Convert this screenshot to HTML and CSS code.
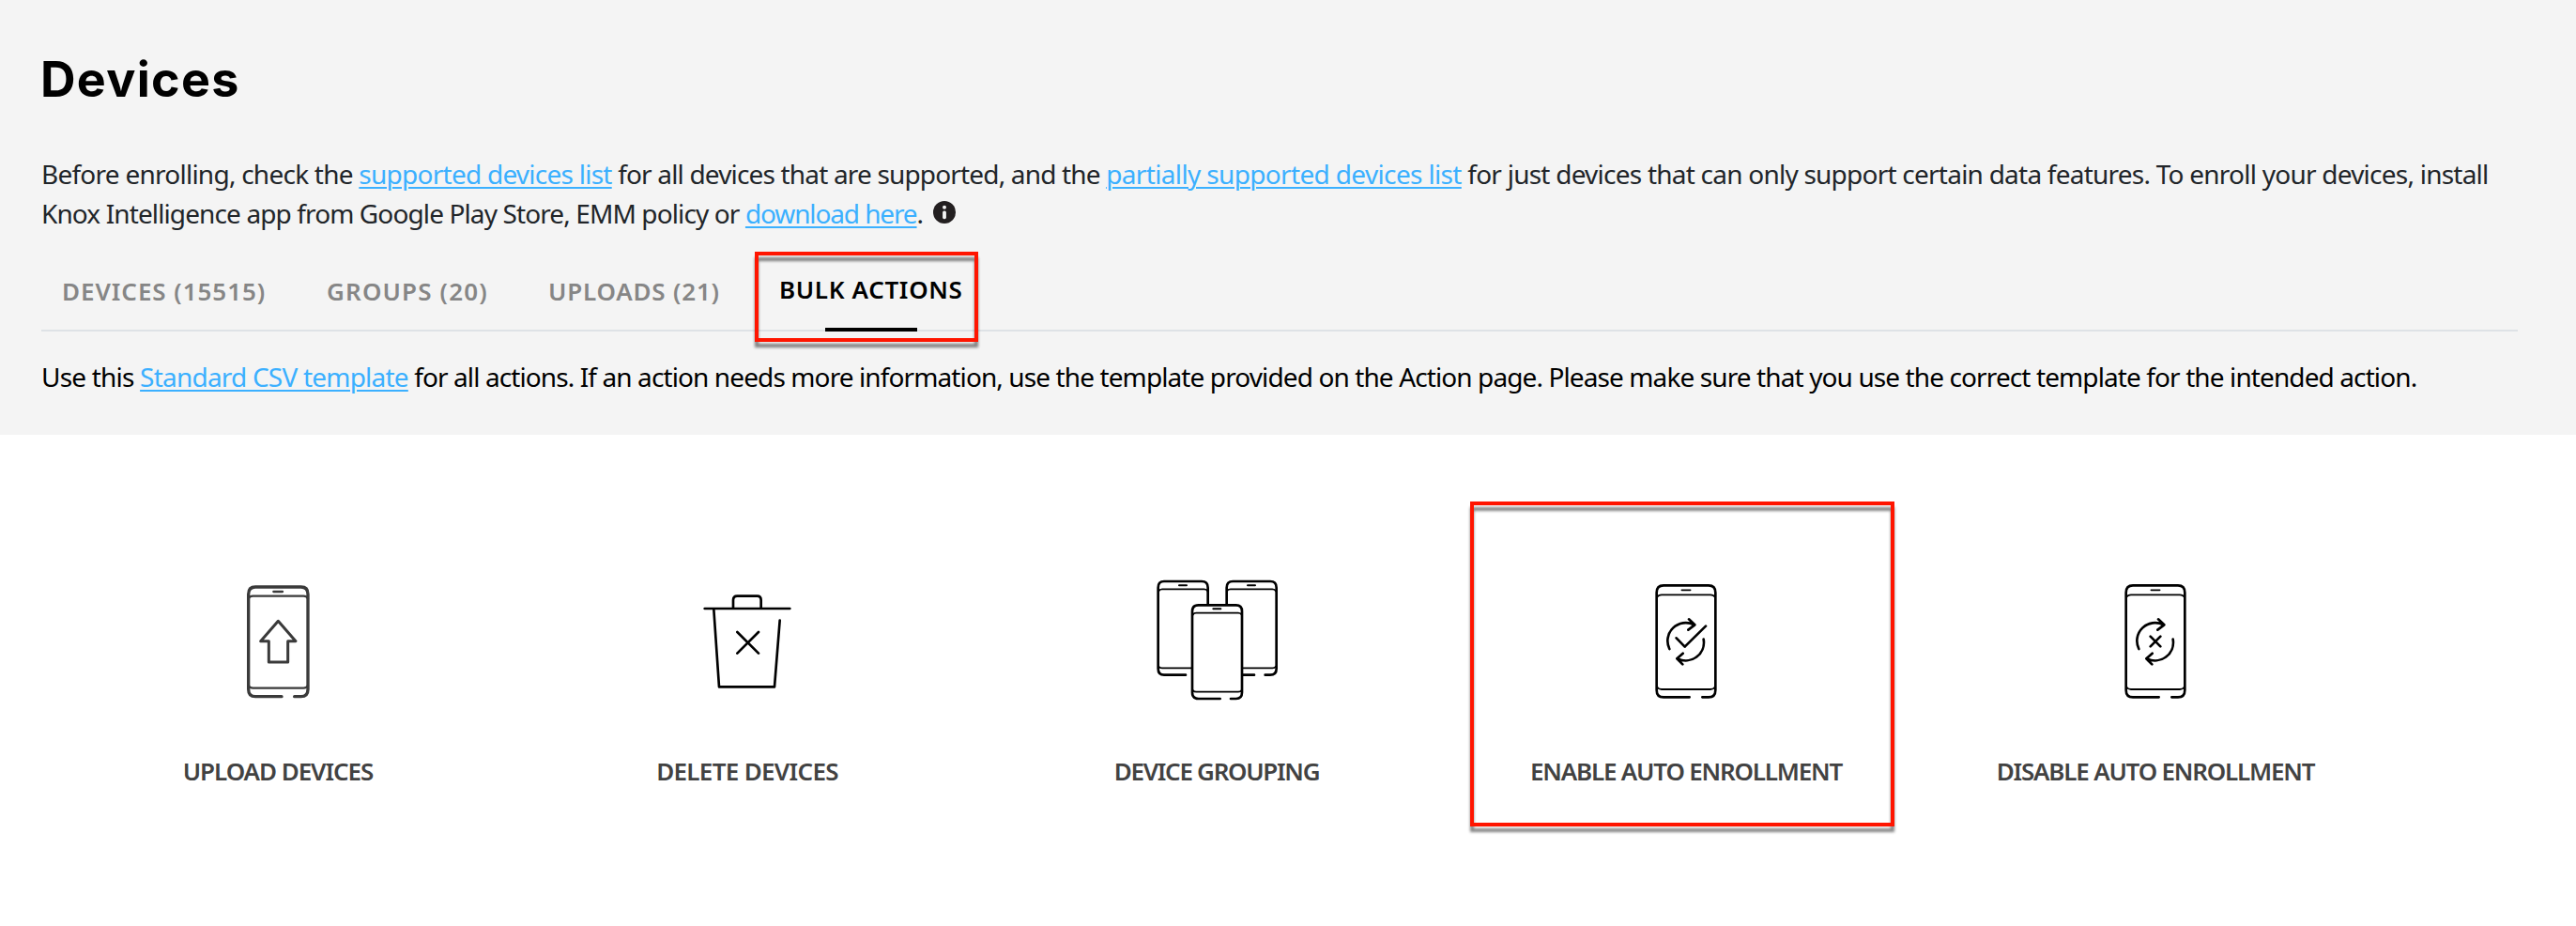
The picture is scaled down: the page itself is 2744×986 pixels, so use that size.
FILE: index.html
```
<!DOCTYPE html>
<html lang="en">
<head>
<meta charset="utf-8">
<title>Devices</title>
<link rel="stylesheet" href="styles.css">
</head>
<body>
<header class="header">
  <h1 class="title">Devices</h1>
  <p class="intro"><span class="t1">Before enrolling, check the </span><a class="t1">supported devices list</a><span class="t2"> for all devices that are supported, and the </span><a class="t3">partially supported devices list</a><span class="t4"> for just devices that can only support certain data features. To enroll your devices, install</span><br><span class="t5">Knox Intelligence app from Google Play Store, EMM policy or </span><a class="t6">download here</a>.<svg class="info" viewBox="0 0 24 24"><circle cx="12" cy="12" r="12" fill="#231f20"/><circle cx="12" cy="6.7" r="2" fill="#f4f4f4"/><rect x="10.1" y="10.6" width="3.8" height="8.6" rx="1.6" fill="#f4f4f4"/></svg></p>
  <nav class="tabs">
    <span class="tab tab-devices">DEVICES (15515)</span>
    <span class="tab tab-groups">GROUPS (20)</span>
    <span class="tab tab-uploads">UPLOADS (21)</span>
    <span class="tab tab-active">BULK ACTIONS<i class="underline"></i><i class="mark mark-tab"></i></span>
  </nav>
  <p class="hint"><span class="h1">Use this </span><a class="h2">Standard CSV template</a><span class="h3"> for all actions. If an action needs more information, use the template provided on the Action page. Please make sure that you use the correct template for the intended action.</span></p>
</header>
<main class="actions">
  <div class="action">
    <svg class="icon soft" viewBox="3 0 450 480">
      <path d="M240 425H156Q134 425 134 402V98Q134 75 156 75H302Q324 75 324 98V402Q324 425 302 425H281" stroke-width="10"/>
      <path d="M134 112Q138 104 148 104H310Q320 104 324 112M134 390Q138 398 148 398H310Q320 398 324 390" stroke-width="7"/>
      <path d="M214 90H243" stroke-width="7"/>
      <path d="M229 184L285 248H260V315H199V248H173Z" stroke-width="9"/>
    </svg>
    <span class="label l1">UPLOAD DEVICES</span>
  </div>
  <div class="action">
    <svg class="icon" viewBox="3 0 450 480">
      <path d="M92 144H364M183 144V117Q183 104 196 104H260Q272 104 272 117V144" stroke-width="8"/>
      <path d="M121 147L138 394H315L332 182M196 219L264 287M264 219L196 287" stroke-width="8"/>
    </svg>
    <span class="label l2">DELETE DEVICES</span>
  </div>
  <div class="action">
    <svg class="icon" viewBox="33 0 450 480">
      <path d="M159 356H90Q71 356 71 336V77Q71 57 90 57H210Q230 57 230 77V132M290 132V77Q290 57 310 57H429Q449 57 449 77V336Q449 356 429 356H413M342 356H378M269 432H200Q180 432 180 412V153Q180 133 200 133H320Q339 133 339 153V412Q339 432 320 432H303" stroke-width="8"/>
      <path d="M73 88Q76 82 84 82H218Q226 82 229 88M291 88Q294 82 302 82H436Q444 82 447 88M73 329Q76 334 84 334H178M342 334H436Q444 334 447 329M182 164Q185 158 193 158H327Q335 158 338 164M182 405Q185 410 193 410H327Q335 410 338 405" stroke-width="5.5"/>
      <path d="M138 70H162M357 70H381M247 145H271" stroke-width="6"/>
    </svg>
    <span class="label l3">DEVICE GROUPING</span>
  </div>
  <div class="action">
    <svg class="icon" viewBox="3 0 450 480">
      <path d="M239 427H156Q134 427 134 404V93Q134 70 156 70H300Q322 70 322 93V404Q322 427 300 427H280" stroke-width="8"/>
      <path d="M136 107Q140 100 150 100H306Q316 100 320 107M136 395Q140 402 150 402H306Q316 402 320 395" stroke-width="5.5"/>
      <path d="M214 85H242" stroke-width="5"/>
      <path d="M175 273A58 58 0 0 1 254 196M237 178L256 196L235 212M284 242A58 58 0 0 1 201 304M218 287L199 304L217 322M197 238L224 266L291 200" stroke-width="8"/>
    </svg>
    <span class="label l4">ENABLE AUTO ENROLLMENT</span>
    <i class="mark mark-action"></i>
  </div>
  <div class="action">
    <svg class="icon" viewBox="3 0 450 480">
      <path d="M239 427H156Q134 427 134 404V93Q134 70 156 70H300Q322 70 322 93V404Q322 427 300 427H280" stroke-width="8"/>
      <path d="M136 107Q140 100 150 100H306Q316 100 320 107M136 395Q140 402 150 402H306Q316 402 320 395" stroke-width="5.5"/>
      <path d="M214 85H242" stroke-width="5"/>
      <path d="M175 273A58 58 0 0 1 254 196M237 178L256 196L235 212M284 242A58 58 0 0 1 201 304M218 287L199 304L217 322M212 233L244 265M244 233L212 265" stroke-width="8"/>
    </svg>
    <span class="label l5">DISABLE AUTO ENROLLMENT</span>
  </div>
</main>
</body>
</html>
```
FILE: styles.css
```
* { box-sizing: border-box; }
body {
  margin: 0;
  min-height: 986px;
  background: #fff;
  font-family: "Noto Sans", "Open Sans", sans-serif;
  font-size: 28px;
  line-height: 42px;
}
a {
  color: #3bb0ff;
  text-decoration: underline;
  text-decoration-thickness: 2px;
  text-underline-offset: 3px;
}
.header {
  height: 463px;
  padding: 53px 62px 0 44px;
  background: #f4f4f4;
}
.title {
  margin: 0 0 47px -1px;
  font: 700 52px/64px Inter, sans-serif;
  letter-spacing: 1.3px;
  color: #000;
}
.intro {
  margin: 0;
  color: #212529;
  white-space: nowrap;
}
.t1 { letter-spacing: -0.75px; }
.t2 { letter-spacing: -0.83px; }
.t3 { letter-spacing: -0.65px; }
.t4 { letter-spacing: -0.765px; }
.t5 { letter-spacing: -0.885px; }
.t6 { letter-spacing: -1.12px; }
.info {
  width: 24px;
  height: 24px;
  margin-left: 10px;
  vertical-align: 0;
}
.tabs {
  display: flex;
  height: 105px;
  padding: 44px 0 0 22px;
  border-bottom: 2px solid #dee2e6;
  font-size: 26px;
  font-weight: 600;
  line-height: 36px;
  color: #868686;
  white-space: nowrap;
}
.tab-devices { width: 282px; letter-spacing: 0.95px; }
.tab-groups { width: 236px; letter-spacing: 1.15px; }
.tab-uploads { width: 246px; letter-spacing: 0.8px; }
.tab-active {
  position: relative;
  margin-top: -2px;
  letter-spacing: 0.65px;
  color: #000;
}
.underline {
  position: absolute;
  left: 49px;
  top: 59px;
  width: 98px;
  height: 4px;
  background: #000;
}
.mark {
  position: absolute;
  border: 4px solid #ff1500;
  filter: drop-shadow(0 6px 1.5px rgba(0, 0, 0, 0.48));
}
.mark-tab {
  left: -26px;
  top: -22px;
  width: 238px;
  height: 96px;
}
.hint {
  margin: 27px 0 0;
  color: #000;
  white-space: nowrap;
}
.h1 { letter-spacing: -0.8px; }
.h2 { letter-spacing: -0.786px; }
.h3 { letter-spacing: -0.893px; }
.actions {
  display: grid;
  grid-template-columns: repeat(5, 500px);
  padding: 137px 0 0 46px;
}
.action {
  position: relative;
  display: flex;
  flex-direction: column;
  align-items: center;
  gap: 43px;
}
.icon {
  width: 150px;
  height: 160px;
  fill: none;
  stroke: #000;
  stroke-linecap: round;
  stroke-linejoin: round;
}
.soft { stroke: #3a3a3a; }
.label {
  font-size: 26px;
  font-weight: 600;
  line-height: 36px;
  color: #424242;
  white-space: nowrap;
}
.l1 { letter-spacing: -1.05px; }
.l2 { letter-spacing: -0.68px; }
.l3 { letter-spacing: -1.3px; }
.l4 { letter-spacing: -1.2px; }
.l5 { letter-spacing: -1.2px; }
.mark-action {
  left: 20px;
  top: -66px;
  width: 452px;
  height: 346px;
}
```
